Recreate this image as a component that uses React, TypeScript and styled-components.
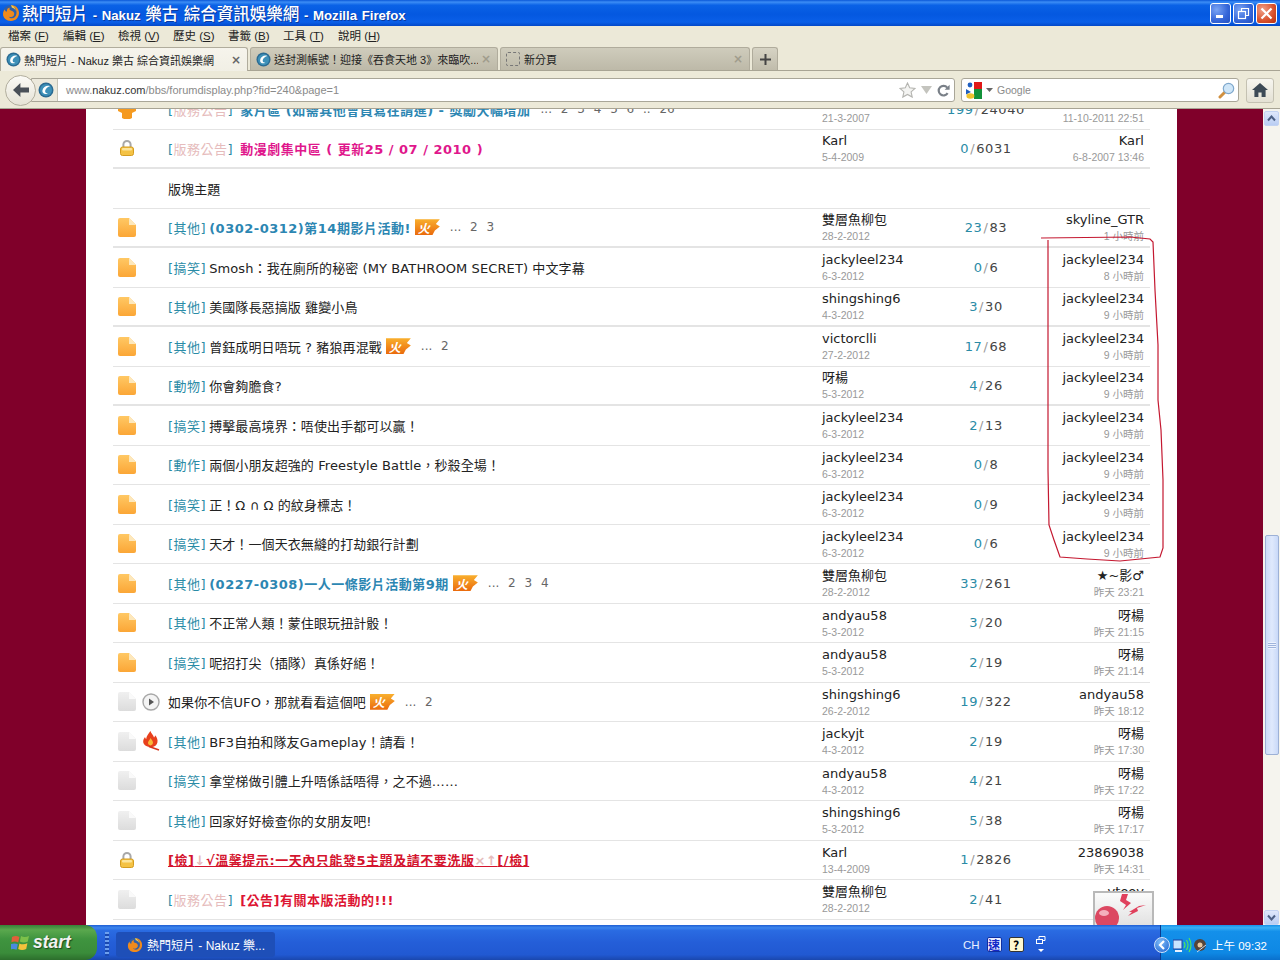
import React from "react";
import styled, { createGlobalStyle } from "styled-components";

const UI = '"DejaVu Sans","Noto Sans CJK TC",sans-serif';
const CJK = '"Liberation Sans","Noto Sans CJK TC",sans-serif';

const Global = createGlobalStyle`
  html, body { margin: 0; padding: 0; background: #ece9d8; }
  #root { width: 1280px; height: 960px; overflow: hidden; }
  * { box-sizing: border-box; }
`;

const Screen = styled.div`
  position: relative;
  width: 1280px;
  height: 960px;
  display: flex;
  flex-direction: column;
  overflow: hidden;
  font-family: ${CJK};
`;

/* ---------- window chrome ---------- */
const TitleBar = styled.div`
  height: 26px;
  flex: none;
  display: flex;
  align-items: center;
  padding: 0 2px 0 2px;
  background: linear-gradient(180deg, #0a58d8 0%, #3c8df5 8%, #0a62e6 20%, #0458e0 55%, #0a5fe8 85%, #0348c8 100%);
  color: #fff;
`;
const TitleText = styled.div`
  margin-left: 2px;
  font-family: "Liberation Sans","Noto Sans CJK TC",sans-serif;
  font-size: 13.2px;
  font-weight: 700;
  word-spacing: 1px;
  white-space: nowrap;
  flex: 1;
  text-shadow: 1px 1px 0 #0a3aa0;
`;
const TitleBig = styled.span`
  font-size: 16.5px;
  font-weight: 500;
`;
const WinBtns = styled.div`
  display: flex;
  gap: 2px;
  margin-right: 1px;
`;
const WinBtn = styled.div<{ $close?: boolean }>`
  width: 21px;
  height: 21px;
  border: 1px solid #fff;
  border-radius: 3px;
  display: flex;
  align-items: center;
  justify-content: center;
  background: ${(p) =>
    p.$close
      ? "radial-gradient(circle at 30% 30%, #f0a088, #d8512c 60%, #b83010)"
      : "radial-gradient(circle at 30% 30%, #7aa4f4, #3465d8 60%, #2450c0)"};
`;

const MenuBar = styled.div`
  height: 21px;
  flex: none;
  display: flex;
  align-items: center;
  padding: 0 0 3px 8px;
  background: #ece9d8;
  font-size: 11.5px;
  color: #222;
`;
const MenuItem = styled.div`
  width: 55px;
  white-space: nowrap;
  flex: none;
`;
const MenuKey = styled.span`
  text-decoration: underline;
`;

const TabBar = styled.div`
  height: 24px;
  flex: none;
  display: flex;
  align-items: flex-end;
  gap: 2px;
  background: #ece9d8;
  border-bottom: 1px solid #a8a494;
`;
const Tab = styled.div<{ $active?: boolean; $w: number }>`
  width: ${(p) => p.$w}px;
  height: ${(p) => (p.$active ? 24 : 23)}px;
  margin-bottom: ${(p) => (p.$active ? -1 : 0)}px;
  flex: none;
  display: flex;
  align-items: center;
  padding: 0 6px 0 5px;
  gap: 3px;
  font-size: 11px;
  color: #222;
  white-space: nowrap;
  overflow: hidden;
  border: 1px solid #b0ac9c;
  border-bottom: none;
  border-radius: 3px 3px 0 0;
  background: ${(p) =>
    p.$active ? "linear-gradient(180deg,#f6f4ec,#f1efe5)" : "linear-gradient(180deg,#cfccbc,#bdb9a8)"};
`;
const TabLabel = styled.span`
  flex: 1;
  overflow: hidden;
`;
const TabClose = styled.span<{ $dim?: boolean }>`
  font-size: 12px;
  font-weight: 700;
  font-family: ${UI};
  color: ${(p) => (p.$dim ? "#a09c8c" : "#666")};
`;
const BlankIcon = styled.span`
  width: 14px;
  height: 14px;
  border: 1px dashed #777;
  border-radius: 2px;
  flex: none;
  margin-right: 1px;
`;
const NewTab = styled.div`
  width: 26px;
  height: 23px;
  flex: none;
  display: flex;
  align-items: center;
  justify-content: center;
  border: 1px solid #b0ac9c;
  border-bottom: none;
  border-radius: 3px 3px 0 0;
  background: linear-gradient(180deg,#d6d3c4,#c0bcab);
`;

const NavBar = styled.div`
  height: 38px;
  flex: none;
  display: flex;
  align-items: center;
  padding: 1px 7px 0 5px;
  background: #ece9d8;
  border-bottom: 1px solid #a8a494;
`;
const BackBtn = styled.div`
  width: 31px;
  height: 31px;
  flex: none;
  border-radius: 50%;
  border: 1px solid #b2ae9e;
  background: linear-gradient(180deg,#fbfaf6,#e6e3d6);
  display: flex;
  align-items: center;
  justify-content: center;
  z-index: 1;
`;
const UrlField = styled.div`
  flex: none;
  width: 924px;
  height: 24px;
  margin-left: -5px;
  display: flex;
  align-items: center;
  background: #fff;
  border: 1px solid #a9a698;
  border-radius: 0 3px 3px 0;
`;
const SiteBtn = styled.div`
  width: 26px;
  height: 100%;
  flex: none;
  display: flex;
  align-items: center;
  justify-content: center;
  padding-left: 3px;
  background: #ece9dc;
  border-right: 1px solid #c6c3b6;
`;
const UrlText = styled.div`
  flex: 1;
  padding-left: 8px;
  font-family: "Liberation Sans",sans-serif;
  font-size: 11px;
  color: #8a8a8a;
`;
const UrlHost = styled.span`
  color: #333;
`;
const UrlIcons = styled.div`
  display: flex;
  align-items: center;
  gap: 5px;
  padding-right: 4px;
`;
const SearchField = styled.div`
  flex: none;
  width: 278px;
  height: 24px;
  margin-left: 6px;
  display: flex;
  align-items: center;
  gap: 4px;
  padding: 0 3px 0 4px;
  background: #fff;
  border: 1px solid #a9a698;
  border-radius: 3px;
`;
const SearchText = styled.div`
  flex: 1;
  font-size: 10.5px;
  font-family: "Liberation Sans",sans-serif;
  color: #8a8a8a;
`;
const HomeBtn = styled.div`
  width: 28px;
  height: 25px;
  margin-left: 7px;
  flex: none;
  display: flex;
  align-items: center;
  justify-content: center;
  border: 1px solid #c4c1b2;
  border-radius: 3px;
  background: linear-gradient(180deg,#f7f6f0,#e4e1d4);
`;

/* ---------- page ---------- */
const PageArea = styled.div`
  height: 816px;
  flex: none;
  display: flex;
  overflow: hidden;
`;
const Maroon = styled.div<{ $w: number }>`
  width: ${(p) => p.$w}px;
  flex: none;
  background: #80002a;
`;
const Sheet = styled.div`
  width: 1091px;
  flex: none;
  background: #fff;
  padding-left: 27px;
  overflow: hidden;
`;
const Table = styled.div`
  width: 1037px;
  margin-top: -19px;
`;
const Row = styled.div`
  height: 39.5px;
  display: grid;
  grid-template-columns: 55px 654px 118px 92px 118px;
  align-items: center;
  border-bottom: 1px solid #e4e4e4;
  font-family: ${UI};
  font-size: 13px;
  color: #222;
  &:nth-child(even):nth-child(-n + 8) {
    border-bottom-width: 2px;
  }
`;
const IconCell = styled.div`
  display: flex;
  align-items: center;
  gap: 6px;
  padding-left: 5px;
`;
const IconSlot = styled.div`
  width: 18px;
  height: 20px;
  flex: none;
  display: flex;
  align-items: center;
  justify-content: center;
`;
const TitleCell = styled.div`
  display: flex;
  align-items: center;
  white-space: nowrap;
`;
const Bracket = styled.span<{ $notice?: boolean }>`
  color: #2a8ba6;
  letter-spacing: 0.5px;
  margin-right: ${(p) => (p.$notice ? 7 : 3)}px;
`;
const Pale = styled.span`
  color: #e6bcbc;
`;
const Subject = styled.span<{ $kind?: string }>`
  color: ${(p) =>
    p.$kind === "blue" ? "#2c86b2" : p.$kind === "pink" ? "#e0178c" : p.$kind === "red" ? "#dd1533" : "#222"};
  font-weight: ${(p) => (p.$kind ? 700 : 400)};
  letter-spacing: ${(p) => (p.$kind ? 0.5 : 0.1)}px;
`;
const Warning = styled.span`
  color: #d4142e;
  font-weight: 700;
  letter-spacing: 0.55px;
  text-decoration: underline;
`;
const Hot = styled.span`
  width: 25px;
  height: 16px;
  margin-left: 4px;
  flex: none;
  display: inline-flex;
  align-items: center;
  padding-left: 3px;
  font-family: "Noto Sans CJK TC",sans-serif;
  font-size: 12px;
  font-weight: 700;
  font-style: italic;
  color: #fff;
  background: linear-gradient(180deg,#f9b02e,#ea6a0c);
  clip-path: polygon(0 0, 100% 0, 84% 30%, 100% 45%, 80% 70%, 70% 100%, 0 100%);
`;
const Pages = styled.span`
  margin-left: 10px;
  color: #666;
  word-spacing: 5px;
  font-size: 12px;
`;
const AuthorCell = styled.div`
  display: flex;
  flex-direction: column;
  padding-top: 2px;
  line-height: 16px;
  white-space: nowrap;
`;
const LastCell = styled(AuthorCell)`
  align-items: flex-end;
  padding-right: 6px;
`;
const Small = styled.span`
  font-family: "Liberation Sans","Noto Sans CJK TC",sans-serif;
  font-size: 10.5px;
  color: #999;
`;
const Counts = styled.div`
  text-align: center;
  color: #444;
  letter-spacing: 0.6px;
`;
const Reply = styled.span`
  color: #2a8ba6;
`;
const Slash = styled.span`
  color: #999;
  margin: 0 1px;
`;

/* ---------- scrollbar ---------- */
const ScrollBar = styled.div`
  width: 17px;
  flex: none;
  display: flex;
  flex-direction: column;
  align-items: center;
  padding: 2px 0 0;
  background: #f5f4ee;
`;
const ScrollBtn = styled.div`
  width: 15px;
  height: 15px;
  flex: none;
  display: flex;
  align-items: center;
  justify-content: center;
  border-radius: 2px;
  background: linear-gradient(180deg,#dfe8fb,#b9cdf3);
  border: 1px solid #c3d3f2;
`;
const ScrollThumb = styled.div`
  width: 14px;
  height: 220px;
  margin-top: 409px;
  flex: none;
  display: flex;
  align-items: center;
  justify-content: center;
  border: 1px solid #9db1d6;
  border-radius: 2px;
  background: linear-gradient(90deg,#cddcf9,#dfe9fc 50%,#c9d9f8);
`;
const ThumbGrip = styled.div`
  width: 8px;
  height: 7px;
  background: repeating-linear-gradient(180deg,#eef3fe 0 1px,#9fb4dc 1px 2px);
`;
const ScrollRest = styled.div`
  flex: 1;
`;

/* ---------- overlays ---------- */
const Annotation = styled.svg`
  position: absolute;
  left: 0;
  top: 0;
  pointer-events: none;
`;
const Widget = styled.div`
  position: absolute;
  left: 1093px;
  top: 891px;
  width: 61px;
  height: 34px;
  border: 2px solid #b9b9b9;
  border-bottom: none;
  background: linear-gradient(180deg,#fbfbfb,#e2e2e2);
  overflow: hidden;
`;

/* ---------- taskbar ---------- */
const TaskBar = styled.div`
  height: 35px;
  flex: none;
  display: flex;
  align-items: stretch;
  background: linear-gradient(180deg,#1f5fd4 0%,#3d86ee 8%,#2a6be2 16%,#245ed8 50%,#2159d2 85%,#1a47ae 100%);
`;
const StartBtn = styled.div`
  width: 97px;
  flex: none;
  display: flex;
  align-items: center;
  gap: 3px;
  padding-left: 11px;
  border-radius: 0 12px 12px 0;
  background: linear-gradient(180deg,#388038 0%,#5aa84e 14%,#3f943f 40%,#3a8c3a 80%,#2c6e2c 100%);
  color: #f2f2f2;
  font-family: "Liberation Sans",sans-serif;
  font-style: italic;
  font-weight: 700;
  font-size: 17.5px;
  text-shadow: 1px 1px 1px #1c4a1c;
`;
const Dots = styled.div`
  width: 4px;
  margin: 7px 0 4px 8px;
  flex: none;
  background: repeating-linear-gradient(180deg,#6ea0ee 0 2px,#1a48b0 2px 4px);
`;
const TaskButton = styled.div`
  width: 159px;
  height: 25px;
  margin: 7px 0 0 7px;
  flex: none;
  display: flex;
  align-items: center;
  gap: 4px;
  padding-left: 11px;
  border-radius: 3px;
  background: #1e4fb8;
  color: #fff;
  font-size: 12px;
  white-space: nowrap;
`;
const TaskSpace = styled.div`
  flex: 1;
`;
const LangBar = styled.div`
  width: 205px;
  flex: none;
  display: flex;
  align-items: center;
  padding: 4px 0 0 8px;
  color: #e8f0ff;
  font-size: 11.5px;
  font-family: "Liberation Sans",sans-serif;
`;
const LangKey = styled.span<{ $q?: boolean }>`
  width: 15px;
  height: 15px;
  margin-left: 7px;
  display: inline-flex;
  align-items: center;
  justify-content: center;
  border: 1px solid ${(p) => (p.$q ? "#333" : "#1030a0")};
  border-radius: 2px;
  background: ${(p) => (p.$q ? "#fff8d0" : "#e8ecff")};
  color: ${(p) => (p.$q ? "#000" : "#1428c8")};
  font-family: "Noto Sans CJK TC",sans-serif;
  font-weight: 700;
  font-size: 12px;
`;
const RestoreIcon = styled.svg`
  margin-left: 12px;
`;
const Tray = styled.div`
  width: 120px;
  flex: none;
  position: relative;
  display: flex;
  align-items: center;
  padding: 4px 0 0 12px;
  border-left: 1px solid #0a3a90;
  background: linear-gradient(180deg,#1590ea 0%,#39b0f5 8%,#1490ea 18%,#0e88e4 80%,#0a70cc 100%);
  color: #fff;
  font-size: 11.5px;
  white-space: nowrap;
`;
const TrayArrow = styled.div`
  position: absolute;
  left: -7px;
  top: 12px;
  width: 16px;
  height: 16px;
  border-radius: 50%;
  display: flex;
  align-items: center;
  justify-content: center;
  background: radial-gradient(circle at 40% 30%,#7ebcf8,#1c62d0);
  border: 1px solid #cfe2fb;
`;
const Clock = styled.span`
  margin-left: 5px;
`;

/* ---------- drawings ---------- */
const Firefox = ({ s = 18 }: { s?: number }) => (
  <svg width={s} height={s} viewBox="0 0 18 18" style={{ flex: "none" }}>
    <circle cx="9" cy="9" r="8" fill="#2f5fa8" />
    <path d="M9 1C13.5 1 17 4.6 17 9s-3.5 8-8 8-8-3-8-7c0-2 .8-3.6 1.8-4.6C3 7 4 7.6 5 7.4 4.6 5.4 6 3.6 8 3.8 7 4.8 7.4 6 9 6.4c2.6.6 3.8 2.4 3 4.6-.8 2-3.6 2.8-5.4 1.4C9 16 14 14 14.5 9.5 15 5.5 12.5 2.5 9 1z" fill="#ef8a1c" />
    <path d="M9 1c2 .6 4.4 2.4 4.8 6-1-2-2.4-3-4-3.4C9.6 2.6 9.4 1.6 9 1z" fill="#fbcf48" />
  </svg>
);
const SiteIcon = ({ s = 15 }: { s?: number }) => (
  <svg width={s} height={s} viewBox="0 0 16 16" style={{ flex: "none" }}>
    <circle cx="8" cy="8" r="7.5" fill="#2a6a92" />
    <circle cx="8" cy="8" r="6" fill="#3d90b8" />
    <path d="M12 4.2C9 3 5 5 4.4 8.5 4 11.5 7 13 10 11.5 8 11.5 6.8 10.4 7.2 8.6 7.8 6.2 10 4.8 12 4.2z" fill="#fff" />
  </svg>
);
const GoogleIcon = () => (
  <svg width="16" height="17" viewBox="0 0 16 17" style={{ flex: "none" }}>
    <rect x="8" y="0" width="8" height="7" fill="#e01818" />
    <rect x="8" y="7" width="8" height="10" fill="#12923a" />
    <rect x="5" y="3" width="3" height="8" fill="#fff" />
    <circle cx="4" cy="3" r="2.4" fill="#1f5fc0" />
    <path d="M0 7l5 3-5 2.4z" fill="#1f5fc0" />
    <ellipse cx="4.4" cy="14" rx="4" ry="2.8" fill="#eec22c" />
  </svg>
);
const Lens = () => (
  <svg width="17" height="17" viewBox="0 0 17 17" style={{ flex: "none" }}>
    <path d="M2 15l5-5" stroke="#d09040" strokeWidth="3" strokeLinecap="round" />
    <circle cx="10.5" cy="6.5" r="5.2" fill="#cfe6f8" stroke="#7fa8cc" strokeWidth="1.2" />
  </svg>
);
const StarIcon = () => (
  <svg width="17" height="16" viewBox="0 0 17 16">
    <path d="M8.5 1l2.2 4.8 5.3.6-3.9 3.5 1.1 5.2-4.7-2.7-4.7 2.7 1.1-5.2L1 6.4l5.3-.6z" fill="#f4f4f2" stroke="#b4b4b0" strokeWidth="1.1" />
  </svg>
);
const Drop = () => (
  <svg width="11" height="8" viewBox="0 0 11 8">
    <path d="M0 0h11L5.5 8z" fill="#c4c4be" />
  </svg>
);
const Reload = () => (
  <svg width="13" height="13" viewBox="0 0 13 13">
    <path d="M10.6 9.2A4.8 4.8 0 1 1 10.2 3.6" fill="none" stroke="#7a8088" strokeWidth="2.2" />
    <path d="M12.6 .8v5H7.6z" fill="#7a8088" />
  </svg>
);
const HomeGlyph = () => (
  <svg width="16" height="14" viewBox="0 0 16 14">
    <path d="M8 0L0 7h2.4v7h4V9.4h3.2V14h4V7H16z" fill="#3d4a56" />
  </svg>
);
const BackArrow = () => (
  <svg width="16" height="14" viewBox="0 0 16 14">
    <path d="M7.4 0L0 7l7.4 7V9.6H16V4.4H7.4z" fill="#4a5058" />
  </svg>
);
const FileIcon = ({ grey }: { grey?: boolean }) => (
  <svg width="18" height="19" viewBox="0 0 18 19">
    <defs>
      <linearGradient id={grey ? "fg" : "fo"} x1="0" y1="0" x2="0" y2="1">
        <stop offset="0" stopColor={grey ? "#f0f0f0" : "#ffc864"} />
        <stop offset="1" stopColor={grey ? "#dcdcdc" : "#fba636"} />
      </linearGradient>
    </defs>
    <path d="M2 0h9l7 7v10a2 2 0 0 1-2 2H2a2 2 0 0 1-2-2V2a2 2 0 0 1 2-2z" fill={`url(#${grey ? "fg" : "fo"})`} />
    <path d="M11 0l7 7h-7z" fill={grey ? "#fafafa" : "#fde8bc"} />
  </svg>
);
const LockIcon = () => (
  <svg width="14" height="16" viewBox="0 0 14 16">
    <path d="M3.4 8V4.6a3.6 3.6 0 0 1 7.2 0V8" fill="none" stroke="#a8a8a8" strokeWidth="2" />
    <rect x="0.5" y="7" width="13" height="8.5" rx="2" fill="#f4c244" stroke="#d49c20" />
    <rect x="2" y="8" width="10" height="2.4" rx="1" fill="#fce49a" />
  </svg>
);
const PinIcon = () => (
  <svg width="18" height="20" viewBox="0 0 18 20">
    <path d="M9 0L18 9V12L14 14V19L12 20H6L4 19V14L0 12V9z" fill="#f59a20" />
  </svg>
);
const PlayIcon = () => (
  <svg width="18" height="18" viewBox="0 0 18 18">
    <circle cx="9" cy="9" r="8" fill="#f4f4f4" stroke="#a8a8a8" strokeWidth="1.4" />
    <path d="M7 5.6l5 3.4-5 3.4z" fill="#555" />
  </svg>
);
const FireIcon = () => (
  <svg width="18" height="20" viewBox="0 0 18 20">
    <path d="M8.4 0c.8 3 3 3.6 3.6 6.6.8-.8 1-1.6 1-2.4 2 2 3 4.6 2.4 7.4-.5 2.6-2.6 4.6-6.4 4.6S1.4 14 1.2 11c-.1-2.4 1-3.8 1.8-5 .2 1 .6 1.6 1.2 2C4.2 5 6.6 3 8.4 0z" fill="#e8401c" />
    <path d="M8.6 7c.4 1.6 2.4 2.4 2.4 4.6 0 1.6-1 2.8-2.6 2.8S5.8 13.2 6 11.6c.2-1.8 2-2.6 2.6-4.6z" fill="#f8b838" />
    <path d="M7 15.6l10 3.4" stroke="#d8341c" strokeWidth="1.6" />
  </svg>
);
const WinFlag = () => (
  <svg width="19" height="18" viewBox="0 0 19 18" style={{ flex: "none" }}>
    <path d="M1 3c2.4-1.2 5-1.2 7.4 0L7.2 8.4C5 7.4 2.6 7.4.4 8.2z" fill="#e0603a" />
    <path d="M10 2c2.4 1.2 5 1.2 8 0l-1.2 5.6c-2.8 1.2-5.4 1.2-8 0z" fill="#7cc04a" />
    <path d="M0 10c2.4-.8 4.8-.8 6.8.2L5.6 15.8C3.4 14.8 1.4 14.8-.6 15.6z" fill="#4a8ae0" />
    <path d="M8.4 9.4c2.4 1.2 5 1.2 8-.2l-1.2 5.8c-3 1.4-5.6 1.2-8 0z" fill="#f4c23c" />
  </svg>
);

type RowData = {
  icon?: "orange" | "grey" | "lock" | "pin";
  extra?: "play" | "fire";
  tag?: string;
  notice?: boolean;
  subject?: React.ReactNode;
  kind?: string;
  hot?: boolean;
  pages?: string;
  author?: string;
  date?: string;
  reply?: string;
  total?: string;
  last?: string;
  when?: string;
};

const rows: RowData[] = [
  { icon: "pin", notice: true, subject: "家片區 (如需其他會員寫在請進) - 獎勵大幅增加", kind: "blue", pages: "... 2 3 4 5 6 .. 26", author: "Karl", date: "21-3-2007", reply: "199", total: "24040", last: "Karl", when: "11-10-2011 22:51" },
  { icon: "lock", notice: true, subject: "動漫劇集中區 ( 更新25 / 07 / 2010 )", kind: "pink", author: "Karl", date: "5-4-2009", reply: "0", total: "6031", last: "Karl", when: "6-8-2007 13:46" },
  { subject: "版塊主題" },
  { icon: "orange", tag: "其他", subject: "(0302-0312)第14期影片活動!", kind: "blue", hot: true, pages: "... 2 3", author: "雙層魚柳包", date: "28-2-2012", reply: "23", total: "83", last: "skyline_GTR", when: "1 小時前" },
  { icon: "orange", tag: "搞笑", subject: "Smosh：我在廁所的秘密 (MY BATHROOM SECRET) 中文字幕", author: "jackyleel234", date: "6-3-2012", reply: "0", total: "6", last: "jackyleel234", when: "8 小時前" },
  { icon: "orange", tag: "其他", subject: "美國隊長惡搞版 雞變小鳥", author: "shingshing6", date: "4-3-2012", reply: "3", total: "30", last: "jackyleel234", when: "9 小時前" },
  { icon: "orange", tag: "其他", subject: "曾鈺成明日唔玩 ? 豬狼再混戰", hot: true, pages: "... 2", author: "victorclli", date: "27-2-2012", reply: "17", total: "68", last: "jackyleel234", when: "9 小時前" },
  { icon: "orange", tag: "動物", subject: "你會夠膽食?", author: "呀楊", date: "5-3-2012", reply: "4", total: "26", last: "jackyleel234", when: "9 小時前" },
  { icon: "orange", tag: "搞笑", subject: "搏擊最高境界：唔使出手都可以贏！", author: "jackyleel234", date: "6-3-2012", reply: "2", total: "13", last: "jackyleel234", when: "9 小時前" },
  { icon: "orange", tag: "動作", subject: "兩個小朋友超強的 Freestyle Battle，秒殺全場！", author: "jackyleel234", date: "6-3-2012", reply: "0", total: "8", last: "jackyleel234", when: "9 小時前" },
  { icon: "orange", tag: "搞笑", subject: "正！Ω ∩ Ω 的紋身標志！", author: "jackyleel234", date: "6-3-2012", reply: "0", total: "9", last: "jackyleel234", when: "9 小時前" },
  { icon: "orange", tag: "搞笑", subject: "天才！一個天衣無縫的打劫銀行計劃", author: "jackyleel234", date: "6-3-2012", reply: "0", total: "6", last: "jackyleel234", when: "9 小時前" },
  { icon: "orange", tag: "其他", subject: "(0227-0308)一人一條影片活動第9期", kind: "blue", hot: true, pages: "... 2 3 4", author: "雙層魚柳包", date: "28-2-2012", reply: "33", total: "261", last: "★~影♂", when: "昨天 23:21" },
  { icon: "orange", tag: "其他", subject: "不正常人類！蒙住眼玩扭計骰！", author: "andyau58", date: "5-3-2012", reply: "3", total: "20", last: "呀楊", when: "昨天 21:15" },
  { icon: "orange", tag: "搞笑", subject: "呢招打尖（插隊）真係好絕！", author: "andyau58", date: "5-3-2012", reply: "2", total: "19", last: "呀楊", when: "昨天 21:14" },
  { icon: "grey", extra: "play", subject: "如果你不信UFO，那就看看這個吧", hot: true, pages: "... 2", author: "shingshing6", date: "26-2-2012", reply: "19", total: "322", last: "andyau58", when: "昨天 18:12" },
  { icon: "grey", extra: "fire", tag: "其他", subject: "BF3自拍和隊友Gameplay！請看！", author: "jackyjt", date: "4-3-2012", reply: "2", total: "19", last: "呀楊", when: "昨天 17:30" },
  { icon: "grey", tag: "搞笑", subject: "拿堂梯做引體上升唔係話唔得，之不過……", author: "andyau58", date: "4-3-2012", reply: "4", total: "21", last: "呀楊", when: "昨天 17:22" },
  { icon: "grey", tag: "其他", subject: "回家好好檢查你的女朋友吧!", author: "shingshing6", date: "5-3-2012", reply: "5", total: "38", last: "呀楊", when: "昨天 17:17" },
  { icon: "lock", subject: <Warning>[檢]<Pale>↓</Pale>√溫馨提示:一天內只能發5主題及請不要洗版<Pale>×↑</Pale>[/檢]</Warning>, author: "Karl", date: "13-4-2009", reply: "1", total: "2826", last: "23869038", when: "昨天 14:31" },
  { icon: "grey", notice: true, subject: "[公告]有關本版活動的!!!", kind: "red", author: "雙層魚柳包", date: "28-2-2012", reply: "2", total: "41", last: "vtoov", when: "昨天 14:02" },
];

const MainIcon = ({ icon }: { icon?: RowData["icon"] }) => {
  if (icon === "orange") return <FileIcon />;
  if (icon === "grey") return <FileIcon grey />;
  if (icon === "lock") return <LockIcon />;
  if (icon === "pin") return <PinIcon />;
  return null;
};

const menus: [string, string][] = [
  ["檔案", "F"], ["編輯", "E"], ["檢視", "V"], ["歷史", "S"], ["書籤", "B"], ["工具", "T"], ["說明", "H"],
];

export default function App() {
  return (
    <Screen>
      <Global />
      <TitleBar>
        <Firefox />
        <TitleText>
          <TitleBig>熱門短片</TitleBig> - Nakuz <TitleBig>樂古 綜合資訊娛樂網</TitleBig> - Mozilla Firefox
        </TitleText>
        <WinBtns>
          <WinBtn>
            <svg width="11" height="11" viewBox="0 0 11 11"><rect x="1" y="7" width="7" height="3" fill="#fff" /></svg>
          </WinBtn>
          <WinBtn>
            <svg width="13" height="13" viewBox="0 0 13 13" fill="none" stroke="#fff" strokeWidth="1.2"><rect x="1.5" y="4.5" width="7" height="7" /><path d="M4.5 4V1.5h7v7H9" /></svg>
          </WinBtn>
          <WinBtn $close>
            <svg width="13" height="13" viewBox="0 0 13 13"><path d="M1.5 1.5l10 10M11.5 1.5l-10 10" stroke="#fff" strokeWidth="2.2" /></svg>
          </WinBtn>
        </WinBtns>
      </TitleBar>
      <MenuBar>
        {menus.map(([a, k]) => (
          <MenuItem key={k}>
            {a} (<MenuKey>{k}</MenuKey>)
          </MenuItem>
        ))}
      </MenuBar>
      <TabBar>
        <Tab $active $w={248}>
          <SiteIcon />
          <TabLabel>熱門短片 - Nakuz 樂古 綜合資訊娛樂網</TabLabel>
          <TabClose>×</TabClose>
        </Tab>
        <Tab $w={248}>
          <SiteIcon />
          <TabLabel>送封測帳號！迎接《吞食天地 3》來臨吹...</TabLabel>
          <TabClose $dim>×</TabClose>
        </Tab>
        <Tab $w={250}>
          <BlankIcon />
          <TabLabel>新分頁</TabLabel>
          <TabClose $dim>×</TabClose>
        </Tab>
        <NewTab>
          <svg width="11" height="11" viewBox="0 0 11 11"><path d="M5.5 0v11M0 5.5h11" stroke="#444" strokeWidth="2" /></svg>
        </NewTab>
      </TabBar>
      <NavBar>
        <BackBtn>
          <BackArrow />
        </BackBtn>
        <UrlField>
          <SiteBtn>
            <SiteIcon s={16} />
          </SiteBtn>
          <UrlText>
            www.<UrlHost>nakuz.com</UrlHost>/bbs/forumdisplay.php?fid=240&amp;page=1
          </UrlText>
          <UrlIcons>
            <StarIcon />
            <Drop />
            <Reload />
          </UrlIcons>
        </UrlField>
        <SearchField>
          <GoogleIcon />
          <svg width="7" height="4" viewBox="0 0 7 4"><path d="M0 0h7L3.5 4z" fill="#666" /></svg>
          <SearchText>Google</SearchText>
          <Lens />
        </SearchField>
        <HomeBtn>
          <HomeGlyph />
        </HomeBtn>
      </NavBar>
      <PageArea>
        <Maroon $w={86} />
        <Sheet>
          <Table>
            {rows.map((r, i) => (
              <Row key={i}>
                <IconCell>
                  <IconSlot>
                    <MainIcon icon={r.icon} />
                  </IconSlot>
                  <IconSlot>
                    {r.extra === "play" && <PlayIcon />}
                    {r.extra === "fire" && <FireIcon />}
                  </IconSlot>
                </IconCell>
                <TitleCell>
                  {r.notice && (
                    <Bracket $notice>
                      [<Pale>版務公告</Pale>]
                    </Bracket>
                  )}
                  {r.tag && <Bracket>[{r.tag}]</Bracket>}
                  <Subject $kind={r.kind}>{r.subject}</Subject>
                  {r.hot && <Hot>火</Hot>}
                  {r.pages && <Pages>{r.pages}</Pages>}
                </TitleCell>
                <AuthorCell>
                  <span>{r.author}</span>
                  {r.date && <Small>{r.date}</Small>}
                </AuthorCell>
                <Counts>
                  {r.reply && (
                    <>
                      <Reply>{r.reply}</Reply>
                      <Slash>/</Slash>
                      {r.total}
                    </>
                  )}
                </Counts>
                <LastCell>
                  <span>{r.last}</span>
                  {r.when && <Small>{r.when}</Small>}
                </LastCell>
              </Row>
            ))}
          </Table>
        </Sheet>
        <Maroon $w={86} />
        <ScrollBar>
          <ScrollBtn>
            <svg width="9" height="7" viewBox="0 0 9 7"><path d="M1 5.5l3.5-4 3.5 4" fill="none" stroke="#4d6185" strokeWidth="2" /></svg>
          </ScrollBtn>
          <ScrollThumb>
            <ThumbGrip />
          </ScrollThumb>
          <ScrollRest />
          <ScrollBtn>
            <svg width="9" height="7" viewBox="0 0 9 7"><path d="M1 1.5l3.5 4 3.5-4" fill="none" stroke="#4d6185" strokeWidth="2" /></svg>
          </ScrollBtn>
        </ScrollBar>
      </PageArea>
      <TaskBar>
        <StartBtn>
          <WinFlag />
          start
        </StartBtn>
        <Dots />
        <TaskButton>
          <Firefox s={16} />
          熱門短片 - Nakuz 樂...
        </TaskButton>
        <TaskSpace />
        <LangBar>
          CH
          <LangKey>速</LangKey>
          <LangKey $q>?</LangKey>
          <RestoreIcon width="10" height="17" viewBox="0 0 10 17" fill="none" stroke="#fff">
            <rect x="0.5" y="3.5" width="6" height="4" />
            <path d="M3 3V.5h6v4H7" />
            <path d="M2 13h6l-3 3z" fill="#fff" stroke="none" />
          </RestoreIcon>
        </LangBar>
        <Tray>
          <TrayArrow>
            <svg width="8" height="10" viewBox="0 0 8 10"><path d="M6 1L2 5l4 4" fill="none" stroke="#fff" strokeWidth="2.2" /></svg>
          </TrayArrow>
          <svg width="34" height="18" viewBox="0 0 34 18" style={{ flex: "none" }}>
            <rect x="0" y="4" width="9" height="9" fill="#c8e4ff" stroke="#2040a0" />
            <rect x="2" y="14" width="7" height="2" fill="#e8f2ff" />
            <path d="M11 6q2 3 0 6M13.5 4q3 5 0 10M16 2q4 7 0 14" fill="none" stroke="#50e060" strokeWidth="1.2" />
            <circle cx="27" cy="9" r="6" fill="#554438" />
            <circle cx="27" cy="9" r="2.5" fill="#e8c8a0" />
            <path d="M24 16l9-7" stroke="#c8d8f0" strokeWidth="1" />
          </svg>
          <Clock>上午 09:32</Clock>
        </Tray>
      </TaskBar>
      <Widget>
        <svg width="57" height="32" viewBox="0 0 57 32">
          <circle cx="12" cy="25" r="12" fill="#dc4862" />
          <ellipse cx="9" cy="20" rx="5" ry="3" fill="#f4b0bc" />
          <path d="M27 1l-2 7 6 4-3 5 8-7-5-3 2-6zM34 19l10-6 7-1-9 3 1 3-10 5 4-4z" fill="#e0405c" />
        </svg>
      </Widget>
      <Annotation width="1280" height="960" viewBox="0 0 1280 960" fill="none" stroke="#c41830" strokeWidth="1.2">
        <path d="M1041 238L1130 237L1150 239L1153 242L1155 290L1158 345L1158 400L1161 430L1163 480L1163 548L1160 557L1120 561L1087 559L1060 557L1054 540L1049 525L1048 470L1048 240" />
      </Annotation>
    </Screen>
  );
}
